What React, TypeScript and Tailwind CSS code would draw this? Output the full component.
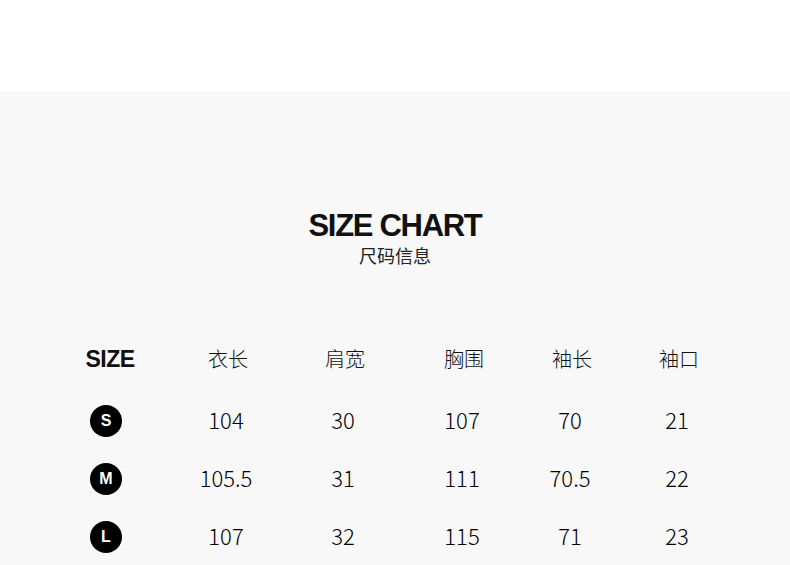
const cjk = { fontFamily: '"Noto Sans CJK SC", "Noto Sans", sans-serif' };
const latin = { fontFamily: '"Liberation Sans", Arial, sans-serif' };

const headers = ['衣长', '肩宽', '胸围', '袖长', '袖口'];

const rows = [
  { size: 'S', values: ['104', '30', '107', '70', '21'] },
  { size: 'M', values: ['105.5', '31', '111', '70.5', '22'] },
  { size: 'L', values: ['107', '32', '115', '71', '23'] },
];

export default function App() {
  return (
    <div className="w-[790px] h-[565px] overflow-hidden bg-white" style={cjk}>
      <div className="h-[91px] bg-white" />
      <div className="bg-[#f8f8f8] pt-[119px] h-[474px]">
        <h1 className="text-center text-[31px] leading-[32px] font-bold tracking-[-1.3px] text-[#111]" style={latin}>
          SIZE CHART
        </h1>
        <p className="mt-[4px] text-center text-[18px] leading-[18px] text-[#222]">尺码信息</p>

        <div className="mt-[64px] ml-[50px] grid grid-cols-[120px_112px_122px_116px_100px_114px] text-[#111]">
          <div className="h-[62px] flex items-center justify-center">
            <span className="text-[23px] font-bold tracking-[-0.5px] text-[#111]" style={latin}>
              SIZE
            </span>
          </div>
          {headers.map((h) => (
            <div key={h} className="h-[62px] flex items-center justify-center pl-[4px] text-[20px] font-light">
              {h}
            </div>
          ))}
          {rows.map((r) => (
            <div key={r.size} className="contents">
              <div className="h-[58px] flex items-center justify-center pr-[8px] pt-[3px]">
                <span
                  className="w-[32px] h-[32px] rounded-full bg-black text-white flex items-center justify-center text-[16px] font-bold"
                  style={latin}
                >
                  {r.size}
                </span>
              </div>
              {r.values.map((v, i) => (
                <div key={r.size + i} className="h-[58px] flex items-center justify-center text-[22px] font-light text-black">
                  {v}
                </div>
              ))}
            </div>
          ))}
        </div>
      </div>
    </div>
  );
}
